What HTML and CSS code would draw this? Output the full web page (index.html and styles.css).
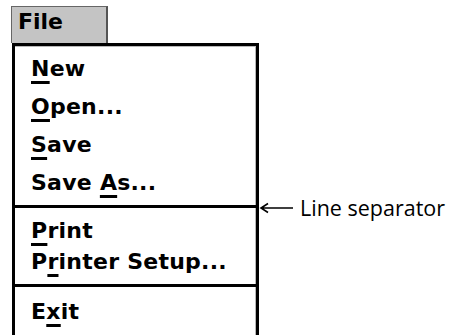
FILE: index.html
```html
<!DOCTYPE html>
<html lang="en">
<head>
    <meta charset="UTF-8">
    <title>File menu</title>
    <link rel="stylesheet" href="styles.css">
</head>
<body>
    <div class="page">
        <div class="tab">File</div>
        <div class="menu">
            <ul class="group first">
                <li><u>N</u>ew</li>
                <li><u>O</u>pen...</li>
                <li><u>S</u>ave</li>
                <li>Save <u>A</u>s...</li>
            </ul>
            <div class="sep"></div>
            <ul class="group second">
                <li><u>P</u>rint</li>
                <li>P<u>r</u>inter Setup...</li>
            </ul>
            <div class="sep"></div>
            <ul class="group third">
                <li>E<u>x</u>it</li>
            </ul>
        </div>

        <div class="callout">
            <svg width="34" height="12" viewBox="0 0 34 12">
                <path d="M2 6 H34 M9 1.5 L2 6 L9 10.5" fill="none" stroke="#000" stroke-width="1.6"/>
            </svg>
            <span>Line separator</span>
        </div>
    </div>
</body>
</html>
```

FILE: styles.css
```css
/* CSS Styling */
body {
    margin: 0;
    background: #ffffff;
    color: #000000;
    overflow: hidden;
}

.page {
    position: relative;
    width: 451px;
    height: 335px;
    padding-top: 6px;
    box-sizing: border-box;
}

.tab {
    width: 88px;
    margin-left: 11px;
    padding: 0 0 6px 6px;
    line-height: 30px;
    background: #c4c4c4;
    border-top: 1px solid #666;
    border-left: 1px solid #666;
    border-right: 2px solid #555;
    font-family: "DejaVu Sans", sans-serif;
    font-weight: bold;
    font-size: 22px;
}

.menu {
    width: 241px;
    height: 300px;
    margin-left: 12px;
    border: 3px solid #000;
    border-bottom: none;
    box-shadow: inset -1px 1px 0 #b8b8b8;
    font-family: "DejaVu Sans", sans-serif;
    font-weight: bold;
    font-size: 22px;
    letter-spacing: 0.25px;
}

.group {
    list-style: none;
    margin: 0;
    padding: 0 0 0 16px;
}

.group u {
    text-decoration-thickness: 3px;
    text-underline-offset: 5px;
}

.first {
    padding-top: 4px;
    line-height: 38px;
}

.second {
    padding-top: 7px;
    padding-bottom: 7px;
    line-height: 31px;
}

.third {
    padding-top: 9px;
    line-height: 31px;
}

.sep {
    height: 3px;
    margin: 3px 0 0;
    background: #000;
}

.second + .sep {
    margin-top: 0;
}

.callout {
    position: absolute;
    left: 259px;
    top: 193px;
    display: flex;
    align-items: center;
    gap: 7px;
    font-family: "Open Sans", sans-serif;
    font-size: 21.5px;
}

.callout svg {
    display: block;
}
```
